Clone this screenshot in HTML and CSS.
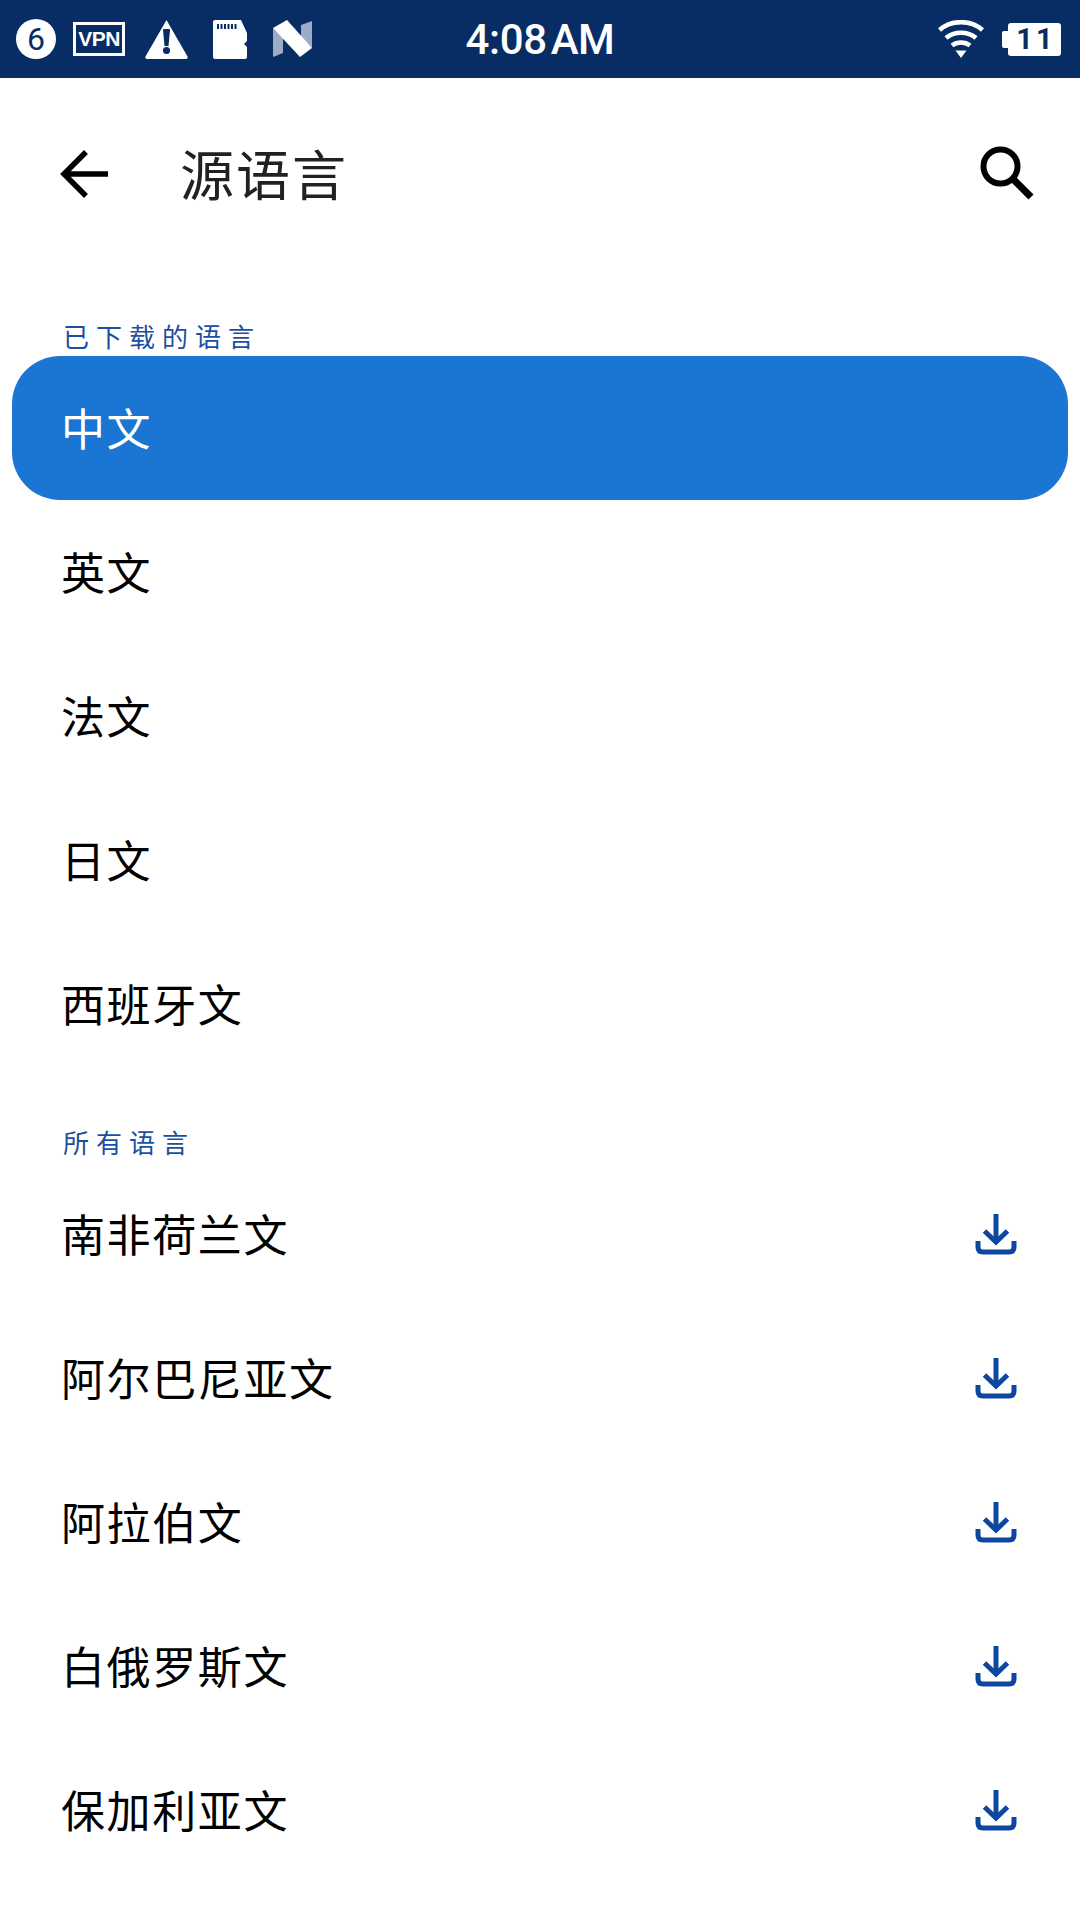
FILE: index.html
```html
<!DOCTYPE html>
<html lang="zh-CN">

<head>
    <meta charset="UTF-8">
    <meta name="viewport" content="width=device-width, initial-scale=1.0">
    <title>源语言</title>
    <link rel="stylesheet" href="styles.css">
</head>

<body>
    <!-- Status bar -->
    <div class="status-bar">
        <div class="status-left">
            <span class="badge">6</span>
            <span class="vpn">VPN</span>
            <svg class="icon-warning" width="43" height="39" viewBox="0 0 43 39">
                <path d="M21.5 0 L42.5 36.500 Q43 39 41 39 L2 39 Q0 39 0.5 36.500 Z" fill="#fff" />
                <path d="M18 10 Q18 9 19 9 H24 Q25 9 25 10 L23.500 26 H19.500 Z" fill="#082c64" />
                <circle cx="21.5" cy="30.500" r="3.500" fill="#082c64" />
            </svg>
            <svg class="icon-sd" width="34" height="39" viewBox="0 0 34 39">
                <path d="M2 0 H28 L34 13 V21 L31 24 L34 27 V37 Q34 39 32 39 H2 Q0 39 0 37 V2 Q0 0 2 0 Z" fill="#fff" />
                <path d="M4 4 h2 v5 h-2 z M7.500 4 h2 v5 h-2 z M11 4 h2 v5 h-2 z M14.500 4 h2 v5 h-2 z M18 4 h2 v5 h-2 z M21.500 4 h2 v5 h-2 z" fill="#082c64" />
            </svg>
            <svg class="icon-n" width="39" height="38" viewBox="0 0 39 38">
                <path d="M0 8 L10 18 V33 L0 37 Z" fill="#9dabc4" />
                <path d="M28 5 L39 1 V28 L28 18 Z" fill="#9dabc4" />
                <path d="M0 8 L14 0 L39 28 L27 37 Z" fill="#fff" />
            </svg>
        </div>
        <div class="clock">4:08<span class="clock-ampm">AM</span></div>
        <div class="status-right">
            <svg class="icon-wifi" width="46" height="38" viewBox="0 0 46 38">
                <g fill="none" stroke="#fff" stroke-width="4.500">
                    <path d="M1.500 10 C13 -0.500 33 -0.500 44.500 10" />
                    <path d="M8 18 C16 11 30 11 38 18" />
                    <path d="M14 25.500 C19 21.500 27 21.500 32 25.500" />
                </g>
                <path d="M17.500 30.500 H28.500 L23 38 Z" fill="#fff" />
            </svg>
            <div class="battery"><span class="battery-level">11</span></div>
        </div>
    </div>

    <!-- Toolbar -->
    <div class="toolbar">
        <svg class="back" width="50" height="50" viewBox="0 0 50 50">
            <path d="M3 25 H48 M26 3 L4 25 L26 47" fill="none" stroke="#000" stroke-width="5.500" />
        </svg>
        <div class="toolbar-title">源语言</div>
        <svg class="search" width="56" height="56" viewBox="0 0 56 56">
            <circle cx="20.500" cy="20.500" r="17" fill="none" stroke="#000" stroke-width="6" />
            <path d="M32 32 L51 51" fill="none" stroke="#000" stroke-width="7" />
        </svg>
    </div>

    <!-- Downloaded languages -->
    <div class="section-label section-first">已下载的语言</div>
    <div class="row row-selected"><span>中文</span></div>
    <div class="row"><span>英文</span></div>
    <div class="row"><span>法文</span></div>
    <div class="row"><span>日文</span></div>
    <div class="row"><span>西班牙文</span></div>

    <!-- All languages -->
    <div class="section-label section-all">所有语言</div>
    <div class="row"><span>南非荷兰文</span>
        <svg class="download" width="42" height="42" viewBox="0 0 42 42">
            <use href="#download-icon" />
        </svg>
    </div>
    <div class="row"><span>阿尔巴尼亚文</span>
        <svg class="download" width="42" height="42" viewBox="0 0 42 42">
            <use href="#download-icon" />
        </svg>
    </div>
    <div class="row"><span>阿拉伯文</span>
        <svg class="download" width="42" height="42" viewBox="0 0 42 42">
            <use href="#download-icon" />
        </svg>
    </div>
    <div class="row"><span>白俄罗斯文</span>
        <svg class="download" width="42" height="42" viewBox="0 0 42 42">
            <use href="#download-icon" />
        </svg>
    </div>
    <div class="row"><span>保加利亚文</span>
        <svg class="download" width="42" height="42" viewBox="0 0 42 42">
            <use href="#download-icon" />
        </svg>
    </div>

    <svg class="defs" width="0" height="0">
        <defs>
            <g id="download-icon" fill="none" stroke="#0d47a1" stroke-width="5">
                <path d="M21 1 V29" />
                <path d="M9.500 18 L21 29 L32.500 18" />
                <path d="M3 28 V34 Q3 39 8 39 H34 Q39 39 39 34 V28" />
            </g>
        </defs>
    </svg>
</body>

</html>
```

FILE: styles.css
```css
* {
    box-sizing: border-box;
}

body {
    margin: 0;
    width: 1080px;
    height: 1920px;
    overflow: hidden;
    background-color: #fff;
    font-family: "Noto Sans CJK SC", "Liberation Sans", sans-serif;
    color: #000;
}

.status-bar {
    display: grid;
    grid-template-columns: 1fr auto 1fr;
    align-items: center;
    height: 78px;
    background-color: #082c64;
    color: #fff;
}

.status-left {
    display: flex;
    align-items: center;
    padding-left: 16px;
}

.badge {
    display: flex;
    align-items: center;
    justify-content: center;
    width: 40px;
    height: 40px;
    border-radius: 50%;
    background-color: #fff;
    color: #082c64;
    font: 400 32px Roboto, sans-serif;
}

.vpn {
    display: flex;
    align-items: center;
    justify-content: center;
    width: 52px;
    height: 34px;
    margin-left: 17px;
    border: 3px solid #fff;
    font: bold 21px "Liberation Sans", sans-serif;
    letter-spacing: -0.5px;
}

.icon-warning {
    margin-left: 20px;
}

.icon-sd {
    margin-left: 25px;
}

.icon-n {
    margin-left: 26px;
}

.clock {
    font: 500 42px Roboto, sans-serif;
    letter-spacing: -0.4px;
}

.clock-ampm {
    margin-left: 4px;
}

.status-right {
    display: flex;
    align-items: center;
    justify-content: flex-end;
    padding-right: 19px;
}

.icon-wifi {
    margin-right: 24px;
}

.battery {
    position: relative;
    display: flex;
    align-items: center;
    justify-content: center;
    width: 53px;
    height: 33px;
    border-radius: 3px;
    background-color: #fff;
    color: #082c64;
}

.battery::before {
    content: "";
    position: absolute;
    left: -6px;
    top: 8px;
    width: 6px;
    height: 17px;
    border-radius: 2px 0 0 2px;
    background-color: #fff;
}

.battery-level {
    font: bold 29px Roboto, sans-serif;
    letter-spacing: 3px;
    margin-right: -3px;
}

.toolbar {
    display: flex;
    align-items: center;
    height: 192px;
    padding: 0 44px 0 60px;
}

.toolbar-title {
    flex: 1;
    margin: 0 0 4px 70px;
    font-size: 54px;
    letter-spacing: 2px;
    color: #212121;
}

.section-label {
    height: 26px;
    font-size: 26px;
    line-height: 26px;
    letter-spacing: 7px;
    color: #1c4f9f;
}

.section-first {
    margin: 53px 0 7px 63px;
}

.section-all {
    margin: 53px 0 7px 63px;
}

.row {
    display: flex;
    align-items: center;
    justify-content: space-between;
    height: 144px;
    padding: 0 63px 0 61px;
    font-size: 44px;
    letter-spacing: 1.6px;
}

.row > span {
    margin-bottom: 2px;
}

.row-selected {
    margin: 0 12px;
    padding-left: 49px;
    border-radius: 48px;
    background-color: #1a76d2;
    color: #fff;
}

.defs {
    position: absolute;
}
```
